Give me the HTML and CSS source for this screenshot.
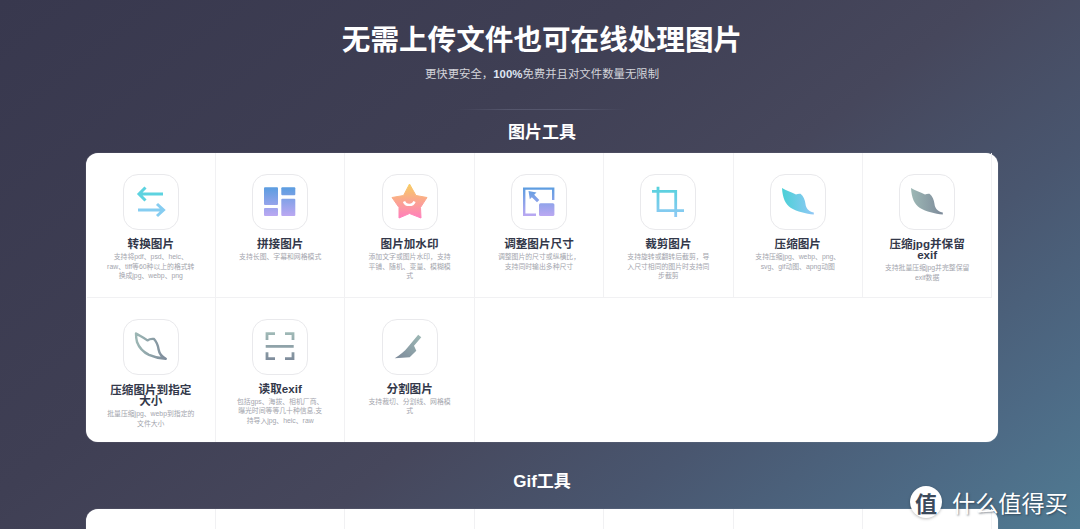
FILE: index.html
```html
<!DOCTYPE html>
<html lang="zh-CN">
<head>
<meta charset="utf-8">
<title>无需上传文件也可在线处理图片</title>
<link rel="stylesheet" href="styles.css">
</head>
<body>
<svg class="defs" width="0" height="0" aria-hidden="true">
  <defs>
    <linearGradient id="gBlue" gradientUnits="userSpaceOnUse" x1="0" y1="13" x2="0" y2="42"><stop offset="0" stop-color="#5a9de0"/><stop offset="1" stop-color="#bba8f2"/></linearGradient>
    <linearGradient id="gStar" gradientUnits="userSpaceOnUse" x1="0" y1="10" x2="0" y2="44"><stop offset="0" stop-color="#f7cd62"/><stop offset="1" stop-color="#ff7fbd"/></linearGradient>
    <linearGradient id="gCrop" gradientUnits="userSpaceOnUse" x1="0" y1="12" x2="0" y2="44"><stop offset="0" stop-color="#55d2dc"/><stop offset="1" stop-color="#90c9f5"/></linearGradient>
    <linearGradient id="gLeaf" gradientUnits="userSpaceOnUse" x1="12" y1="0" x2="44" y2="0"><stop offset="0" stop-color="#4ad0d6"/><stop offset="1" stop-color="#92c8f6"/></linearGradient>
    <linearGradient id="gGrey" gradientUnits="userSpaceOnUse" x1="12" y1="0" x2="44" y2="0"><stop offset="0" stop-color="#9db8b5"/><stop offset="1" stop-color="#7d8a9a"/></linearGradient>
    <linearGradient id="gGreyV" gradientUnits="userSpaceOnUse" x1="0" y1="13" x2="0" y2="42"><stop offset="0" stop-color="#a0bab7"/><stop offset="1" stop-color="#7d8a9a"/></linearGradient>
    <linearGradient id="gKnife" gradientUnits="userSpaceOnUse" x1="36" y1="14" x2="14" y2="40"><stop offset="0" stop-color="#9db8b5"/><stop offset="1" stop-color="#7d8a9a"/></linearGradient>
    <path id="leaf" d="M12 14C16 16.5 21 18 26 20.6C27.5 19.8 29 19.6 30.5 19.8C33.5 22 35 26 35.5 30C36 34 38 37 43.8 38.6V40.6C36 39.6 27 37.6 21 34C15.5 30.5 12.5 24 12 14Z"/>
  </defs>
</svg>

<main class="page">
  <header class="hero">
    <h1 class="hero-title">无需上传文件也可在线处理图片</h1>
    <p class="hero-sub">更快更安全，<b class="hero-strong">100%</b>免费并且对文件数量无限制</p>
    <div class="hero-rule"></div>
  </header>

  <h2 class="section-title">图片工具</h2>
  <section class="tool-card">
    <article class="tool">
      <div class="tool-icon"><svg viewBox="0 0 56 56" class="glyph"><path class="arrow-top" d="M40 20H16M22.5 13.5L16 20L22.5 26.5"/><path class="arrow-bottom" d="M15 36H40M34 30L40.5 36L34 42"/></svg></div>
      <h3 class="tool-name">转换图片</h3>
      <p class="tool-desc">支持将pdf、psd、heic、<br>raw、tiff等60种以上的格式转<br>换成jpg、webp、png</p>
    </article>
    <article class="tool">
      <div class="tool-icon"><svg viewBox="0 0 56 56" class="glyph"><g class="fill-blue"><rect x="12" y="13.3" width="14" height="17.7" rx="1"/><rect x="29.3" y="13.3" width="14" height="8" rx="1"/><rect x="29.3" y="24.7" width="14" height="17.3" rx="1"/><rect x="12" y="34" width="14" height="8" rx="1"/></g></svg></div>
      <h3 class="tool-name">拼接图片</h3>
      <p class="tool-desc">支持长图、字幕和网格模式</p>
    </article>
    <article class="tool">
      <div class="tool-icon"><svg viewBox="0 0 56 56" class="glyph"><path class="fill-star" d="M27.5 10L34 21.5L45 23.5L38.5 33.5L39 44L27.5 39.5L17 44L17 33.5L10 23.5L21.5 21.5Z"/><path class="smile" d="M22 27.5C23.5 32 31 32 32.5 27.5"/></svg></div>
      <h3 class="tool-name">图片加水印</h3>
      <p class="tool-desc">添加文字或图片水印，支持<br>平铺、随机、变量、模糊模<br>式</p>
    </article>
    <article class="tool">
      <div class="tool-icon"><svg viewBox="0 0 56 56" class="glyph"><path class="stroke-blue" d="M42.2 26V14.6H13.2V40.8H25"/><rect class="fill-blue" x="28" y="29.3" width="15.4" height="12.7" rx="1.5"/><path class="fill-blue" d="M17.5 17L25.5 18.5L23.2 20.8L28.3 26L26 28.3L20.8 23.2L18.8 25.2Z"/></svg></div>
      <h3 class="tool-name">调整图片尺寸</h3>
      <p class="tool-desc">调整图片的尺寸或纵横比，<br>支持同时输出多种尺寸</p>
    </article>
    <article class="tool">
      <div class="tool-icon"><svg viewBox="0 0 56 56" class="glyph"><path class="stroke-crop" d="M12 17.4H35.7V43M18 12.7V36.7H44"/></svg></div>
      <h3 class="tool-name">裁剪图片</h3>
      <p class="tool-desc">支持旋转或翻转后截剪，导<br>入尺寸相同的图片时支持同<br>步截剪</p>
    </article>
    <article class="tool">
      <div class="tool-icon"><svg viewBox="0 0 56 56" class="glyph"><use href="#leaf" class="fill-leaf"/></svg></div>
      <h3 class="tool-name">压缩图片</h3>
      <p class="tool-desc">支持压缩jpg、webp、png、<br>svg、gif动图、apng动图</p>
    </article>
    <article class="tool">
      <div class="tool-icon"><svg viewBox="0 0 56 56" class="glyph"><use href="#leaf" class="fill-grey"/></svg></div>
      <h3 class="tool-name">压缩jpg并保留<br>exif</h3>
      <p class="tool-desc">支持批量压缩jpg并完整保留<br>exif数据</p>
    </article>
    <article class="tool tool-last-row">
      <div class="tool-icon"><svg viewBox="0 0 56 56" class="glyph"><path class="leaf-line" d="M13 14.5C17 17 20.5 18.5 24.4 21.4C26.5 20 28.5 19.6 31 20C33.8 23 35 26.5 35.6 30.5C36.2 34 38 37.5 42.8 39.8C37 39.4 31 38 26 35.8C20 33 16 28.4 14 23C13.4 20.5 13 17.5 13 14.5Z"/></svg></div>
      <h3 class="tool-name tool-name-tall">压缩图片到指定<br>大小</h3>
      <p class="tool-desc">批量压缩jpg、webp到指定的<br>文件大小</p>
    </article>
    <article class="tool tool-last-row">
      <div class="tool-icon"><svg viewBox="0 0 56 56" class="glyph"><path class="scan" d="M23 14.7H15V21M33 14.7H41V21M13.7 27.3H41.7M15 33.3V39.7H23M41 33.3V39.7H33"/></svg></div>
      <h3 class="tool-name">读取exif</h3>
      <p class="tool-desc">包括gps、海拔、相机厂商、<br>曝光时间等等几十种信息,支<br>持导入jpg、heic、raw</p>
    </article>
    <article class="tool tool-last-row">
      <div class="tool-icon"><svg viewBox="0 0 56 56" class="glyph"><path class="fill-knife" d="M12.7 39.3C18 36 22.5 32.5 26 28L36.2 15.7L39.3 18.3L32 26.7L34.3 31.7L27.7 38.3Z"/></svg></div>
      <h3 class="tool-name">分割图片</h3>
      <p class="tool-desc">支持裁切、分割线、网格模<br>式</p>
    </article>
  </section>

  <h2 class="section-title section-gif">Gif工具</h2>
  <section class="tool-card">
    <article class="tool"></article>
    <article class="tool"></article>
    <article class="tool"></article>
    <article class="tool"></article>
    <article class="tool"></article>
    <article class="tool"></article>
    <article class="tool"></article>
  </section>
</main>

<aside class="watermark">
  <span class="wm-badge">值</span>
  <span class="wm-text">什么值得买</span>
</aside>
</body>
</html>
```

FILE: styles.css
```css
* { box-sizing: border-box; }

html, body {
  margin: 0;
  height: 529px;
  overflow: hidden;
}

body {
  position: relative;
  font-family: "Liberation Sans", "Noto Sans CJK SC", sans-serif;
  background: linear-gradient(142deg, #38384e 0%, #3f3f54 36%, #46475c 56%, #49566f 72%, #4d6a85 88%, #507b93 100%);
  color: #fff;
}

.defs { position: absolute; }

.page {
  width: 1080px;
  height: 529px;
  overflow: hidden;
  padding: 0 82px 0 86px;
}

.hero {
  display: flex;
  flex-direction: column;
  align-items: center;
  padding-top: 20px;
}

.hero-title {
  margin: 0;
  font-size: 28.6px;
  line-height: 40px;
  font-weight: 700;
  white-space: nowrap;
}

.hero-sub {
  margin: 6px 0 0;
  font-size: 11.4px;
  line-height: 16px;
  color: #d3d4da;
}

.hero-strong { font-weight: 700; color: #dfe6f2; }

.hero-rule {
  width: 170px;
  height: 1px;
  margin-top: 27px;
  background: linear-gradient(90deg, rgba(90, 92, 115, 0), #55566c 30%, #55566c 70%, rgba(90, 92, 115, 0));
}

.section-title {
  margin: 12px 0 9px;
  font-size: 17px;
  line-height: 22px;
  font-weight: 700;
  text-align: center;
}

.section-gif { margin: 29px 0 16px; }

.tool-card {
  display: grid;
  grid-template-columns: repeat(7, 129.4px);
  grid-auto-rows: 144.7px;
  width: 912px;
  padding-left: 0.6px;
  background: #fff;
  color: #33384a;
  border-radius: 12px;
  box-shadow: 0 0 1px rgba(255, 255, 255, 0.5);
}

.tool {
  display: flex;
  flex-direction: column;
  align-items: center;
  padding: 21px 0 0;
  border-right: 1px solid #f1f1f3;
  border-bottom: 1px solid #f1f1f3;
}

.tool-last-row { border-bottom: 0; }

.tool-icon {
  flex: none;
  width: 56px;
  height: 56px;
  border: 1px solid #e9e9ec;
  border-radius: 15px;
}

.glyph {
  display: block;
  width: 56px;
  height: 56px;
  margin: -1px;
  fill: none;
}

.tool-name {
  margin: 8px 0 0;
  font-size: 11.6px;
  line-height: 11.4px;
  font-weight: 700;
  text-align: center;
  white-space: nowrap;
}

.tool-name-tall { margin-top: 9px; }

.tool-desc {
  margin: 2.5px 0 0;
  font-size: 6.85px;
  line-height: 9.7px;
  color: #a3a5ad;
  text-align: center;
  white-space: nowrap;
}

.arrow-top { fill: none; stroke: #5dd3e0; stroke-width: 3; }
.arrow-bottom { fill: none; stroke: #86cdf1; stroke-width: 3; }
.fill-blue { fill: url(#gBlue); }
.stroke-blue { fill: none; stroke: url(#gBlue); stroke-width: 2.4; }
.fill-star { fill: url(#gStar); stroke: url(#gStar); stroke-width: 1; stroke-linejoin: round; }
.smile { fill: none; stroke: #fff; stroke-width: 2.4; }
.stroke-crop { fill: none; stroke: url(#gCrop); stroke-width: 2.8; }
.fill-leaf { fill: url(#gLeaf); }
.fill-grey { fill: url(#gGrey); }
.leaf-line { fill: none; stroke: url(#gGrey); stroke-width: 2.4; stroke-linejoin: round; }
.scan { fill: none; stroke: url(#gGreyV); stroke-width: 2.8; }
.fill-knife { fill: url(#gKnife); }

.watermark {
  position: absolute;
  left: 910px;
  top: 486px;
  display: flex;
  align-items: center;
  gap: 10px;
}

.wm-badge {
  display: flex;
  align-items: center;
  justify-content: center;
  width: 32px;
  height: 32px;
  border-radius: 50%;
  background: #fff;
  color: #3c4a5c;
  font-size: 22px;
  font-weight: 700;
  font-family: "Noto Sans CJK SC", sans-serif;
  box-shadow: 0 1px 3px rgba(0, 0, 0, 0.25);
}

.wm-text {
  font-family: "Noto Sans CJK SC", sans-serif;
  font-size: 23.2px;
  line-height: 32px;
  color: #fff;
  white-space: nowrap;
  text-shadow: 1px 1px 2px rgba(30, 40, 55, 0.55);
}
```
